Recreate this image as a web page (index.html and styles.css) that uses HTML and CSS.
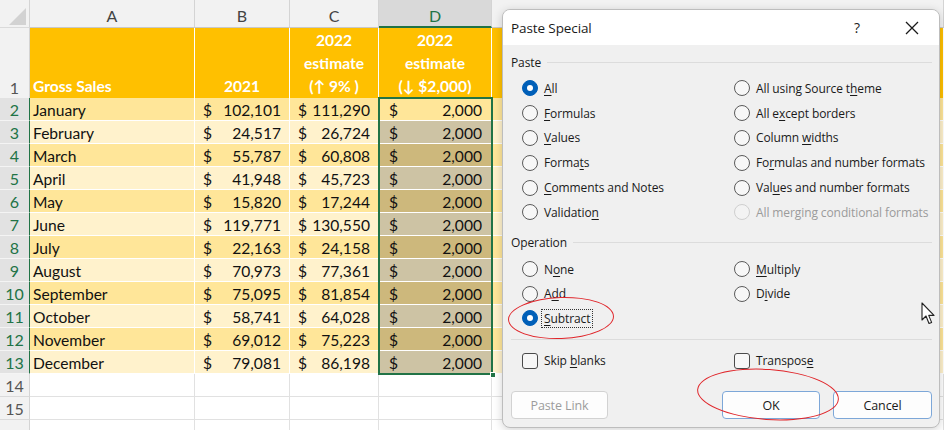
FILE: index.html
```html
<!DOCTYPE html>
<html lang="en">
<head>
<meta charset="utf-8">
<title>Paste Special</title>
<link rel="stylesheet" href="styles.css">
</head>
<body>
<div class="sheet">
  <div class="row hdr">
    <div class="rn corner"><span class="tri"></span></div>
    <div class="ch">A</div><div class="ch">B</div><div class="ch">C</div><div class="ch sel">D</div><div class="ch">E</div>
  </div>
  <div class="row r1">
    <div class="rn">1</div>
    <div class="c h left">Gross Sales</div>
    <div class="c h">2021</div>
    <div class="c h">2022<br>estimate<br>(↑ 9% )</div>
    <div class="c h">2022<br>estimate<br>(↓ $2,000)</div>
    <div class="c h"></div>
  </div>
  <div class="row dark"><div class="rn on">2</div><div class="c t">January</div><div class="c m"><span>$</span><span>102,101</span></div><div class="c m"><span>$</span><span>111,290</span></div><div class="c m d act"><span>$</span><span>2,000</span></div><div class="c"></div></div>
  <div class="row light"><div class="rn on">3</div><div class="c t">February</div><div class="c m"><span>$</span><span>24,517</span></div><div class="c m"><span>$</span><span>26,724</span></div><div class="c m d"><span>$</span><span>2,000</span></div><div class="c"></div></div>
  <div class="row dark"><div class="rn on">4</div><div class="c t">March</div><div class="c m"><span>$</span><span>55,787</span></div><div class="c m"><span>$</span><span>60,808</span></div><div class="c m d"><span>$</span><span>2,000</span></div><div class="c"></div></div>
  <div class="row light"><div class="rn on">5</div><div class="c t">April</div><div class="c m"><span>$</span><span>41,948</span></div><div class="c m"><span>$</span><span>45,723</span></div><div class="c m d"><span>$</span><span>2,000</span></div><div class="c"></div></div>
  <div class="row dark"><div class="rn on">6</div><div class="c t">May</div><div class="c m"><span>$</span><span>15,820</span></div><div class="c m"><span>$</span><span>17,244</span></div><div class="c m d"><span>$</span><span>2,000</span></div><div class="c"></div></div>
  <div class="row light"><div class="rn on">7</div><div class="c t">June</div><div class="c m"><span>$</span><span>119,771</span></div><div class="c m"><span>$</span><span>130,550</span></div><div class="c m d"><span>$</span><span>2,000</span></div><div class="c"></div></div>
  <div class="row dark"><div class="rn on">8</div><div class="c t">July</div><div class="c m"><span>$</span><span>22,163</span></div><div class="c m"><span>$</span><span>24,158</span></div><div class="c m d"><span>$</span><span>2,000</span></div><div class="c"></div></div>
  <div class="row light"><div class="rn on">9</div><div class="c t">August</div><div class="c m"><span>$</span><span>70,973</span></div><div class="c m"><span>$</span><span>77,361</span></div><div class="c m d"><span>$</span><span>2,000</span></div><div class="c"></div></div>
  <div class="row dark"><div class="rn on">10</div><div class="c t">September</div><div class="c m"><span>$</span><span>75,095</span></div><div class="c m"><span>$</span><span>81,854</span></div><div class="c m d"><span>$</span><span>2,000</span></div><div class="c"></div></div>
  <div class="row light"><div class="rn on">11</div><div class="c t">October</div><div class="c m"><span>$</span><span>58,741</span></div><div class="c m"><span>$</span><span>64,028</span></div><div class="c m d"><span>$</span><span>2,000</span></div><div class="c"></div></div>
  <div class="row dark"><div class="rn on">12</div><div class="c t">November</div><div class="c m"><span>$</span><span>69,012</span></div><div class="c m"><span>$</span><span>75,223</span></div><div class="c m d"><span>$</span><span>2,000</span></div><div class="c"></div></div>
  <div class="row light"><div class="rn on">13</div><div class="c t">December</div><div class="c m"><span>$</span><span>79,081</span></div><div class="c m"><span>$</span><span>86,198</span></div><div class="c m d"><span>$</span><span>2,000</span></div><div class="c"></div></div>
  <div class="row blank"><div class="rn">14</div><div class="c"></div><div class="c"></div><div class="c"></div><div class="c"></div><div class="c"></div></div>
  <div class="row blank"><div class="rn">15</div><div class="c"></div><div class="c"></div><div class="c"></div><div class="c"></div><div class="c"></div></div>
  <div class="row blank"><div class="rn"></div><div class="c"></div><div class="c"></div><div class="c"></div><div class="c"></div><div class="c"></div></div>
</div>
<div class="selection"><span class="handle"></span></div>

<div class="dialog">
  <div class="titlebar">
    <span class="title">Paste Special</span>
    <span class="help">?</span>
    <svg class="close" width="14" height="14" viewBox="0 0 14 14"><path d="M1 1 L13 13 M13 1 L1 13" stroke="#1a1a1a" stroke-width="1.3" fill="none"/></svg>
  </div>
  <div class="body">
    <div class="glabel"><span>Paste</span><i></i></div>
    <div class="opts paste">
      <div class="opt"><span class="radio on"></span><span><u>A</u>ll</span></div>
      <div class="opt"><span class="radio"></span><span>All using Source t<u>h</u>eme</span></div>
      <div class="opt"><span class="radio"></span><span><u>F</u>ormulas</span></div>
      <div class="opt"><span class="radio"></span><span>All e<u>x</u>cept borders</span></div>
      <div class="opt"><span class="radio"></span><span><u>V</u>alues</span></div>
      <div class="opt"><span class="radio"></span><span>Column <u>w</u>idths</span></div>
      <div class="opt"><span class="radio"></span><span>Forma<u>t</u>s</span></div>
      <div class="opt"><span class="radio"></span><span>Fo<u>r</u>mulas and number formats</span></div>
      <div class="opt"><span class="radio"></span><span><u>C</u>omments and Notes</span></div>
      <div class="opt"><span class="radio"></span><span>Val<u>u</u>es and number formats</span></div>
      <div class="opt"><span class="radio"></span><span>Validatio<u>n</u></span></div>
      <div class="opt off"><span class="radio"></span><span>All merging conditional formats</span></div>
    </div>
    <div class="glabel op"><span>Operation</span><i></i></div>
    <div class="opts oper">
      <div class="opt"><span class="radio"></span><span>N<u>o</u>ne</span></div>
      <div class="opt"><span class="radio"></span><span><u>M</u>ultiply</span></div>
      <div class="opt"><span class="radio"></span><span>A<u>d</u>d</span></div>
      <div class="opt"><span class="radio"></span><span>D<u>i</u>vide</span></div>
      <div class="opt"><span class="radio on"></span><span class="focus"><u>S</u>ubtract</span></div>
    </div>
    <div class="sep"></div>
    <div class="opts checks">
      <div class="opt"><span class="check"></span><span>Skip <u>b</u>lanks</span></div>
      <div class="opt"><span class="check"></span><span>Transpos<u>e</u></span></div>
    </div>
    <div class="buttons">
      <span class="btn dis">Paste Link</span>
      <span class="grow"></span>
      <span class="btn def">OK</span>
      <span class="btn def">Cancel</span>
    </div>
  </div>
</div>

<span class="ring ring-sub"></span>
<span class="ring ring-ok"></span>
<svg class="cursor" width="16" height="24" viewBox="0 0 16 24"><path d="M1 1 L1 18 L5 14 L8 21.5 L10.6 20.4 L7.7 13.4 L13 13.4 Z" fill="#fff" stroke="#222" stroke-width="1.1" stroke-linejoin="round"/></svg>
</body>
</html>
```
FILE: styles.css
```css
* { box-sizing: border-box; margin: 0; padding: 0; }
html, body { width: 944px; height: 430px; overflow: hidden; }
body { position: relative; background: #fff; font-family: Lato, "Liberation Sans", sans-serif; color: #111; }

.sheet { display: flex; flex-direction: column; font-size: 15.6px; }
.row { display: grid; grid-template-columns: 30px 165px 95px 89px 113px 452px; height: 23px; }
.row.hdr { height: 28px; }
.row.r1 { height: 70px; }

.rn { background: #F2F2F2; color: #555; display: flex; align-items: center; justify-content: center; border-right: 1px solid #D4D4D4; border-bottom: 1px solid #DADADA; font-size: 16px; padding-top: 1px; }
.rn.on { background: #E2E2E2; color: #217346; border-right: 1px solid #217346; border-bottom: 1px solid #F4F4F4; }
.r1 .rn { align-items: flex-end; padding-bottom: 2px; }

.corner { position: relative; background: #F2F2F2; }
.tri { position: absolute; right: 3px; bottom: 2px; width: 17px; height: 17px; background: #D2D2D2; clip-path: polygon(100% 0, 100% 100%, 0 100%); }

.ch { background: #F2F2F2; color: #444; display: flex; align-items: flex-end; justify-content: center; padding-bottom: 2px; border-right: 1px solid #D4D4D4; border-bottom: 1px solid #C8C8C8; font-size: 16px; }
.ch.sel { background: #D9D9D9; color: #217346; border-bottom: 2px solid #217346; padding-bottom: 1px; }

.c { border-right: 1px solid #fff; border-bottom: 1px solid #fff; display: flex; align-items: center; white-space: nowrap; padding-top: 1px; }
.c.t { padding-left: 3px; }
.c.m { justify-content: space-between; padding: 1px 8px 0 8px; }
.c.m.d { padding: 1px 9px 0 10px; }

.r1 .c { background: #FFC000; }
.c.h { color: #fff; font-weight: 700; justify-content: center; align-items: flex-end; text-align: center; line-height: 23px; padding-bottom: 1px; }
.c.h.left { justify-content: flex-start; padding-left: 3px; }

.dark .c { background: #FFE699; }
.light .c { background: #FFF2CC; }
.dark .c.d { background: #CDB87C; }
.light .c.d { background: #CDC3A4; }
.dark .c.d.act { background: #FFE699; }
.blank .c { background: #fff; border-right-color: #E1E1E1; border-bottom-color: #E1E1E1; }

.selection { position: absolute; left: 378px; top: 97px; width: 115px; height: 278px; border: 2px solid #217346; }
.handle { position: absolute; right: -5px; bottom: -5px; width: 6px; height: 6px; background: #217346; border: 1px solid #fff; }

.dialog { position: absolute; left: 502px; top: 9px; width: 438px; height: 419px; background: #F0F0F0; border: 1px solid #BDBDBD; border-radius: 8px; box-shadow: 0 2px 10px rgba(0,0,0,0.18); overflow: hidden; font-family: "Open Sans", "Noto Sans", sans-serif; font-size: 12px; letter-spacing: -0.1px; color: #1a1a1a; }
.titlebar { height: 35px; background: #fff; display: flex; align-items: center; padding-left: 8px; }
.title { font-size: 13.5px; flex: 1; }
.help { font-size: 14px; width: 16px; text-align: center; margin-right: 40px; color: #222; }
.close { margin-right: 20px; }

.body { padding: 0 7px 0 8px; }
.glabel { display: flex; align-items: center; height: 17px; margin-top: 9px; }
.glabel i { flex: 1; height: 1px; background: #DCDCDC; margin-left: 6px; }
.glabel.op { margin-top: 9px; }

.opts { display: grid; grid-template-columns: 212px 1fr; grid-auto-rows: 24.8px; padding-left: 11px; margin-top: 5px; }
.opts.oper { grid-auto-rows: 24.5px; margin-top: 6px; }
.opt { display: flex; align-items: center; gap: 6px; white-space: nowrap; }
.opt u { text-decoration-thickness: 1px; text-underline-offset: 2px; }
.radio { width: 16px; height: 16px; border-radius: 50%; border: 1px solid #5A5A5A; background: #F7F7F7; position: relative; flex: none; }
.radio.on { background: #005FB8; border-color: #005FB8; }
.radio.on::after { content: ""; position: absolute; left: 4px; top: 4px; width: 6px; height: 6px; border-radius: 50%; background: #fff; }
.opt.off { color: #9B9B9B; }
.opt.off .radio { border-color: #CFCFCF; background: #F3F3F3; }
.focus { border: 1px dotted #333; padding: 0 2px; margin-left: -3px; line-height: 17px; }

.sep { height: 1px; background: #DCDCDC; margin-top: 9px; }
.opts.checks { margin-top: 8px; }
.check { width: 16px; height: 16px; border: 1px solid #4A4A4A; border-radius: 3px; background: #F7F7F7; flex: none; }

.buttons { display: flex; margin-top: 18px; gap: 13px; align-items: center; }
.grow { flex: 1; }
.btn { height: 28px; width: 98px; display: flex; align-items: center; justify-content: center; background: #FDFDFD; border: 1px solid #D2D2D2; border-radius: 4px; font-size: 12.5px; }
.btn.dis { color: #9C9C9C; width: 97px; }
.btn.def { border-color: #7DA7D8; }
.btn.def + .btn.def { width: 99px; }

.ring { position: absolute; border: 1.5px solid #E0262B; border-radius: 50%; }
.ring-sub { left: 508px; top: 297px; width: 106px; height: 42px; transform: rotate(-2deg); }
.ring-ok { left: 697px; top: 369px; width: 142px; height: 51px; transform: rotate(4deg); }
.cursor { position: absolute; left: 921px; top: 302px; }
```
